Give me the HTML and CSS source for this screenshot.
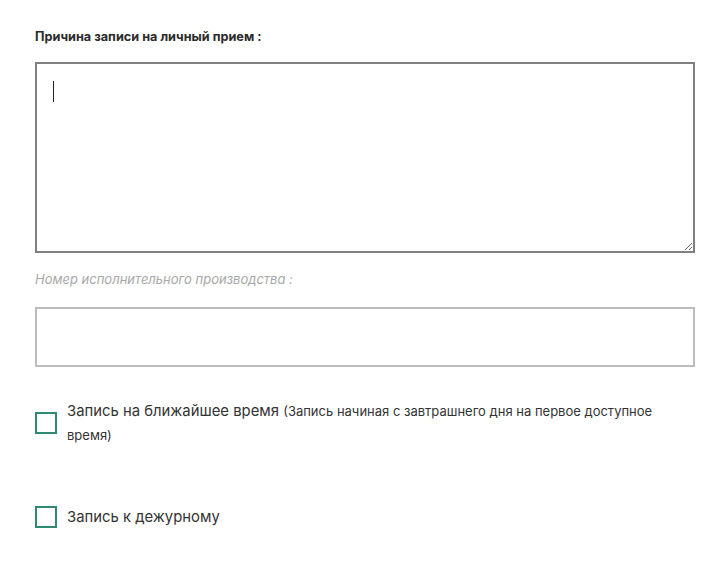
FILE: index.html
```html
<!DOCTYPE html>
<html lang="ru">
<head>
<meta charset="utf-8">
<link rel="stylesheet" href="styles.css">
</head>
<body>
<form class="form">
  <label class="label label-main">Причина записи на личный прием :</label>
  <div class="textarea-wrap">
    <textarea class="textarea"></textarea>
    <span class="caret"></span>
  </div>
  <label class="label label-muted">Номер исполнительного производства :</label>
  <input class="input" type="text">
  <div class="check-row check-first">
    <span class="checkbox"></span>
    <span class="check-text">Запись на ближайшее время <span class="check-note">(Запись начиная с завтрашнего дня на первое доступное время)</span></span>
  </div>
  <div class="check-row check-second">
    <span class="checkbox"></span>
    <span class="check-text">Запись к дежурному</span>
  </div>
</form>
</body>
</html>
```

FILE: styles.css
```css
html, body {
  margin: 0;
  padding: 0;
  background: #ffffff;
}
body {
  font-family: Inter, Roboto, "Liberation Sans", sans-serif;
  color: #333333;
}
.form {
  width: 660px;
  padding: 29px 0 0 35px;
  display: flex;
  flex-direction: column;
}
.label {
  display: block;
  line-height: 16px;
}
.label-main {
  font-size: 12.7px;
  font-weight: 700;
  color: #2b2b2b;
  margin-bottom: 17px;
}
.label-muted {
  font-size: 13px;
  font-style: italic;
  color: #a8a8a8;
  margin-top: 18px;
  margin-bottom: 20px;
}
.textarea-wrap {
  position: relative;
  height: 191px;
}
.textarea {
  box-sizing: border-box;
  width: 660px;
  height: 191px;
  border: 2px solid #808080;
  border-radius: 0;
  margin: 0;
  padding: 16px;
  font-family: inherit;
  font-size: 16px;
  outline: none;
  display: block;
}
.caret {
  position: absolute;
  left: 18px;
  top: 19px;
  width: 1px;
  height: 21px;
  background: #222222;
}
.input {
  box-sizing: border-box;
  width: 660px;
  height: 60px;
  border: 2px solid #bdbdbd;
  border-radius: 0;
  margin: 0;
  padding: 0 16px;
  font-family: inherit;
  font-size: 16px;
  outline: none;
  display: block;
}
.check-row {
  display: flex;
  align-items: center;
  gap: 10px;
}
.check-first {
  margin-top: 32px;
}
.check-second {
  margin-top: 58px;
}
.checkbox {
  flex: none;
  box-sizing: border-box;
  width: 22px;
  height: 22px;
  border: 2px solid #2e8a73;
}
.check-text {
  max-width: 600px;
  font-size: 14.85px;
  line-height: 24px;
  color: #333333;
}
.check-note {
  font-size: 13px;
}
```
